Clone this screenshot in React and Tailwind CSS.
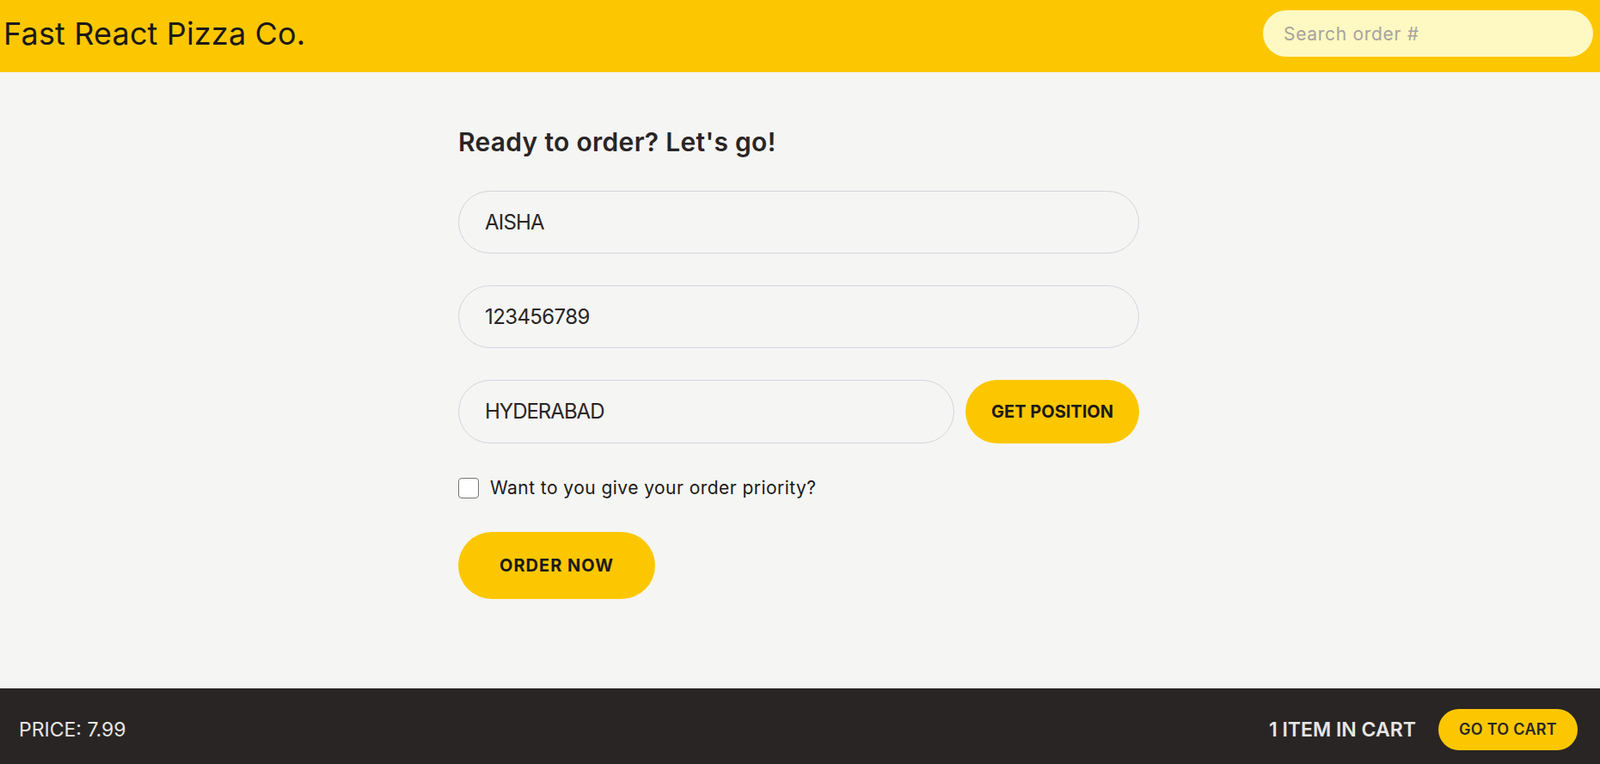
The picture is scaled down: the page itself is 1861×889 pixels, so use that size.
import React from "react";

export default function App() {
  const font = { fontFamily: "Inter, 'Noto Sans', sans-serif" };
  return (
    <div className="h-screen overflow-hidden bg-[#f5f5f4] text-[#292524]" style={font}>
      <header className="h-[84px] bg-[#fdc700] flex items-center justify-between pl-[4px] pr-2 pt-3 pb-[18px]">
        <a className="text-[36px] leading-[40px] font-normal text-[#1c1917] tracking-[0.15px]">Fast React Pizza Co.</a>
        <input
          placeholder="Search order #"
          className="w-[384px] h-[54px] rounded-full bg-[#fef9c2] px-6 text-[21px] tracking-[0.7px] placeholder:text-[#a8a29e] outline-none"
        />
      </header>

      <main className="h-[717px] pt-[60px]">
        <div className="w-[792px] ml-[533px]">
          <h2 className="text-[30px] leading-[42px] font-semibold mb-[36px] tracking-[0.3px]">Ready to order? Let's go!</h2>
          <div className="mb-[37px]">
            <input
              defaultValue="AISHA"
              className="w-full h-[73px] rounded-full border border-[#d4d4dc] bg-transparent px-[30px] text-[24px] tracking-[-0.8px] outline-none"
            />
          </div>
          <div className="mb-[37px]">
            <input
              defaultValue="123456789"
              className="w-full h-[73px] rounded-full border border-[#d4d4dc] bg-transparent px-[30px] text-[24px] tracking-[-0.6px] outline-none"
            />
          </div>
          <div className="flex gap-[13px] h-[74px] mb-[35px]">
            <input
              defaultValue="HYDERABAD"
              className="flex-1 min-w-0 rounded-full border border-[#d4d4dc] bg-transparent px-[30px] text-[24px] tracking-[-1px] outline-none"
            />
            <button className="rounded-full bg-[#fdc700] px-[30px] text-[20px] font-bold uppercase text-[#1c1917] tracking-[0px]">
              Get Position
            </button>
          </div>
          <div className="flex items-center gap-[13px] h-[33px] mb-[35px]">
            <input
              type="checkbox"
              className="appearance-none w-6 h-6 border-[1.5px] border-[#767676] rounded-[4px] bg-white"
            />
            <label className="text-[21px] leading-[33px] text-[#1c1917] tracking-[0.45px]">Want to you give your order priority?</label>
          </div>
          <button className="h-[78px] rounded-full bg-[#fdc700] px-[48px] text-[20px] font-bold uppercase text-[#1c1917] tracking-[1px]">
            Order Now
          </button>
        </div>
      </main>

      <footer className="bg-[#292524] flex items-center justify-between pl-[22px] pr-[26px] py-6 uppercase text-[#e7e5e4]">
        <p className="text-[23px] leading-[32px]">Price: 7.99</p>
        <div className="flex items-center gap-[26px]">
          <p className="text-[23px] leading-[32px] font-semibold">1 item in cart</p>
          <button className="rounded-full bg-[#fdc700] px-6 py-3 text-[18px] leading-[24px] font-semibold text-[#292524] tracking-[0.3px] uppercase">
            Go to cart
          </button>
        </div>
      </footer>
    </div>
  );
}
